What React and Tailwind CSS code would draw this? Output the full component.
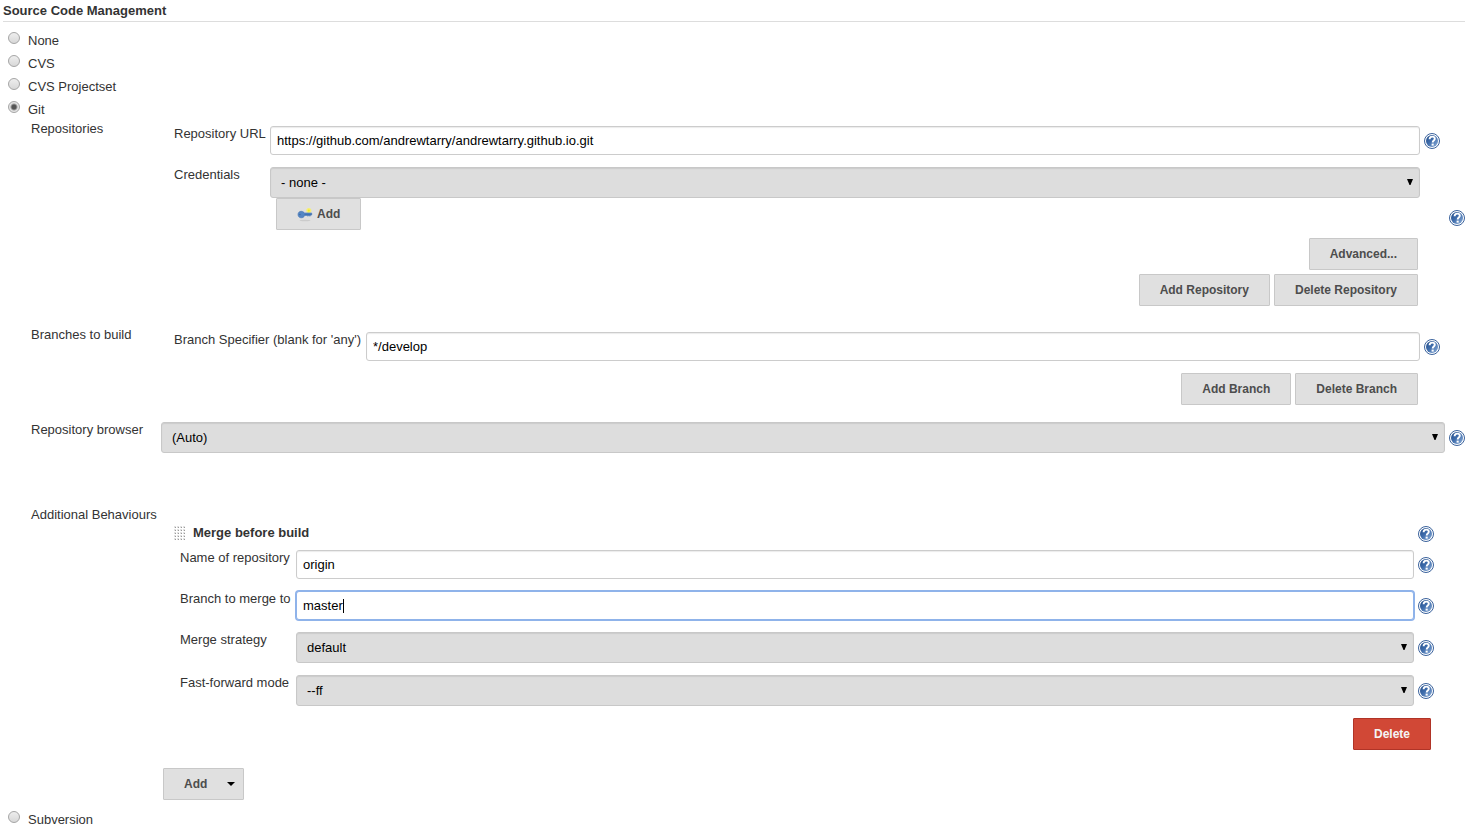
import React, { useState } from "react";

const HelpIcon = () => (
  <svg viewBox="0 0 16 16" className="size-4">
    <defs>
      <linearGradient id="helpFill" x1="0" y1="0" x2="1" y2="1">
        <stop offset="0" stopColor="#204a87" />
        <stop offset="0.45" stopColor="#3e6cab" />
        <stop offset="1" stopColor="#8fb0da" />
      </linearGradient>
    </defs>
    <circle cx="8" cy="8" r="7.5" fill="#fff" stroke="#3a629c" strokeWidth="1" />
    <circle cx="8" cy="8" r="6" fill="url(#helpFill)" />
    <path
      d="M5.6 6.2C5.6 4.4 6.7 3.6 8.2 3.6c1.5 0 2.6.8 2.6 2.2 0 1.7-2.1 1.8-2.1 3.6"
      fill="none"
      stroke="#fff"
      strokeWidth="1.9"
    />
    <rect x="7.6" y="10.6" width="2.1" height="2" fill="#fff" />
  </svg>
);

const KeyIcon = () => (
  <svg viewBox="0 0 16 16" className="size-4">
    <ellipse cx="8" cy="14.5" rx="5.5" ry="0.8" fill="#cbcbcb" />
    <circle cx="11.8" cy="4.6" r="2.5" fill="#fbf25a" opacity="0.8" />
    <path
      d="M4.2 5.3c1.5 0 2.6.7 3.2 1.7h7.3v2l-1.2.3-.6 1-.9-.9-.9.9-1-.9H7.7C7.200 10.900 5.900 11.800 4.200 11.800 2.200 11.800 1 10.400 1 8.500s1.300-3.200 3.200-3.200z"
      fill="#5486c4"
      stroke="#4474b0"
      strokeWidth="0.6"
    />
    <path d="M7.500 8.500h6.800" stroke="#3d6ca9" strokeWidth="0.7" />
    <circle cx="2.900" cy="8.500" r="0.7" fill="#3a679f" />
    <circle cx="11.800" cy="4.600" r="1.100" fill="#f7ea1c" />
  </svg>
);

const DragHandle = () => (
  <svg viewBox="0 0 12 14" className="h-3.5 w-3">
    {[0, 3, 6, 9].map((x) =>
      [0, 3, 6, 9, 12].map((y) => (
        <g key={`${x}-${y}`}>
          <rect x={x} y={y} width="2" height="2" fill="#e2e2e2" />
          <rect x={x + 1} y={y + 1} width="1" height="1" fill="#999" />
        </g>
      ))
    )}
  </svg>
);

const Help = ({ className = "" }) => (
  <button type="button" aria-label="Help" className={`block size-4 shrink-0 ${className}`}>
    <HelpIcon />
  </button>
);

const Button = ({ children, className = "" }) => (
  <button
    type="button"
    className={`flex h-8 items-center rounded-[1px] border pl-5 text-xs font-bold ${
      className || "border-[#c8c8c8] bg-[#e0e0e0] pr-5 text-[#4d4d4d]"
    }`}
  >
    {children}
  </button>
);

const TextInput = ({ id, value, active }) => (
  <div className="relative flex-1">
    <input
      id={id}
      type="text"
      defaultValue={value}
      className={`block h-[29px] w-full rounded-[3px] border bg-white px-1.5 text-black outline-none ${
        active
          ? "border-[#8fb3ea] ring-1 ring-[#8fb3ea]"
          : "border-[#ccc] shadow-[inset_0_1px_1px_rgba(0,0,0,0.08)]"
      }`}
    />
    {active && <span className="absolute top-2 left-[47px] h-3.5 w-px bg-black" />}
  </div>
);

const Select = ({ id, value }) => (
  <div className="relative flex-1">
    <select
      id={id}
      defaultValue={value}
      className="block h-[31px] w-full appearance-none rounded-[3px] border border-[#c8c8c8] bg-[#ddd] px-2.5 text-black shadow-[inset_0_1px_1px_rgba(0,0,0,0.08)] outline-none"
    >
      <option>{value}</option>
    </select>
    <svg
      viewBox="0 0 6 6"
      className="pointer-events-none absolute top-3 right-[7px] size-1.5"
    >
      <path d="M0 0h6L3.5 6h-1z" fill="#000" />
    </svg>
  </div>
);

const Field = ({ id, label, labelWidth, children, help }) => (
  <div className="flex items-start">
    <label htmlFor={id} className={`shrink-0 ${labelWidth}`}>
      {label}
    </label>
    {children}
    <Help className={`ml-1 ${help}`} />
  </div>
);

const Section = ({ title, className = "", htmlFor, children }) => (
  <section className={`grid grid-cols-[130px_1fr] pl-7 ${className}`}>
    {htmlFor ? <label htmlFor={htmlFor}>{title}</label> : <div>{title}</div>}
    <div>{children}</div>
  </section>
);

const ScmOption = ({ name, selected, onSelect }) => (
  <label className="flex h-[23px] items-start gap-2 pl-[5px] leading-[23px]">
    <input
      type="radio"
      name="scm"
      checked={selected === name}
      onChange={() => onSelect(name)}
      className="mt-[3px] size-3 appearance-none rounded-full border border-[#a5a5a5] bg-linear-to-b from-[#eee] to-[#d8d8d8] checked:bg-[radial-gradient(circle,#555_2px,#e4e4e4_4px)]"
    />
    {name}
  </label>
);

const App = () => {
  const [scm, setScm] = useState("Git");

  return (
    <main className="bg-white pr-1 pl-[3px] font-['Liberation_Sans',Arial,sans-serif] text-[13px] leading-4 text-[#333]">
      <h1 className="mb-[7px] h-[22px] border-b border-[#ddd] pt-[3px] font-bold">
        Source Code Management
      </h1>

      {["None", "CVS", "CVS Projectset", "Git"].map((name) => (
        <ScmOption key={name} name={name} selected={scm} onSelect={setScm} />
      ))}

      {/* Repositories */}
      <Section title="Repositories">
        <div className="pt-[5px] pl-[13px]">
          <div className="flex flex-col gap-3 pr-[25px]">
            <Field id="url" label="Repository URL" labelWidth="w-24" help="mt-[7px]">
              <TextInput
                id="url"
                value="https://github.com/andrewtarry/andrewtarry.github.io.git"
              />
            </Field>
            <div className="flex items-start pr-5">
              <label htmlFor="credentials" className="w-24 shrink-0">
                Credentials
              </label>
              <Select id="credentials" value="- none -" />
            </div>
          </div>
          <div className="flex items-start justify-between pl-[102px]">
            <Button>
              <KeyIcon />
              <span className="ml-1">Add</span>
            </Button>
            <Help className="mt-3" />
          </div>
          <div className="mt-2 flex justify-end pr-[47px]">
            <Button>Advanced...</Button>
          </div>
          <div className="mt-1 flex justify-end gap-1 pr-[47px]">
            <Button>Add Repository</Button>
            <Button>Delete Repository</Button>
          </div>
        </div>
      </Section>

      {/* Branches */}
      <Section title="Branches to build" className="mt-[21px]">
        <div className="pt-[5px] pl-[13px]">
          <div className="pr-[25px]">
            <Field
              id="branch"
              label="Branch Specifier (blank for 'any')"
              labelWidth="w-48"
              help="mt-[7px]"
            >
              <TextInput id="branch" value="*/develop" />
            </Field>
          </div>
          <div className="mt-3 flex justify-end gap-1 pr-[47px]">
            <Button>Add Branch</Button>
            <Button>Delete Branch</Button>
          </div>
        </div>
      </Section>

      <Section title="Repository browser" htmlFor="browser" className="mt-[17px]">
        <div className="flex items-start">
          <Select id="browser" value="(Auto)" />
          <Help className="mt-2 ml-1" />
        </div>
      </Section>

      {/* Additional behaviours */}
      <Section title="Additional Behaviours" className="mt-[54px]">
        <div className="pt-[19px] pr-[31px] pl-[13px]">
          <div className="mb-2 flex items-start">
            <DragHandle />
            <h2 className="ml-[7px] flex-1 leading-[14px] font-bold">Merge before build</h2>
            <Help />
          </div>
          <div className="flex flex-col gap-3 pl-1.5">
            <Field id="remote" label="Name of repository" labelWidth="w-29" help="mt-[7px]">
              <TextInput id="remote" value="origin" />
            </Field>
            <Field id="target" label="Branch to merge to" labelWidth="w-29" help="mt-[7px]">
              <TextInput id="target" value="master" active />
            </Field>
            <Field id="strategy" label="Merge strategy" labelWidth="w-29" help="mt-2">
              <Select id="strategy" value="default" />
            </Field>
            <Field id="ff" label="Fast-forward mode" labelWidth="w-29" help="mt-2">
              <Select id="ff" value="--ff" />
            </Field>
            <div className="flex justify-end pr-[3px]">
              <Button className="border-[#b03427] bg-[#d14836] pr-5 text-[#f5f5f5]">
                Delete
              </Button>
            </div>
          </div>
        </div>
        <div className="mt-[18px] mb-2 flex pl-0.5">
          <Button className="border-[#c8c8c8] bg-[#e0e0e0] pr-2 text-[#4d4d4d]">
            Add
            <svg viewBox="0 0 8 4" className="ml-5 h-1 w-2">
              <path d="M0 0h8L4 4z" fill="#000" />
            </svg>
          </Button>
        </div>
      </Section>

      <ScmOption name="Subversion" selected={scm} onSelect={setScm} />
    </main>
  );
};

export default App;
